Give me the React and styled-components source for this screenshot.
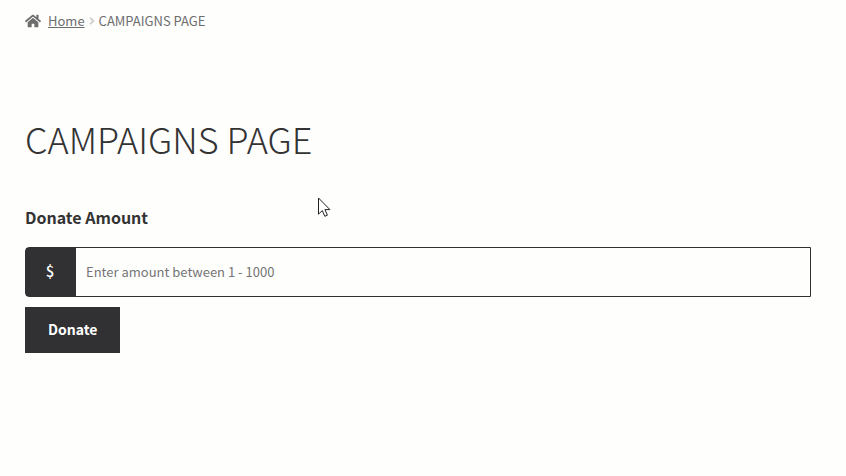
import React, { useState } from "react";
import styled, { createGlobalStyle } from "styled-components";
import { FaAngleRight, FaHome } from "react-icons/fa";

const GlobalStyle = createGlobalStyle`
  * {
    box-sizing: border-box;
  }

  body {
    margin: 0;
    background-color: #fefefd;
    color: #6d6d6d;
    font-family: "Noto Sans CJK SC", "Noto Sans", sans-serif;
    font-size: 14px;
    line-height: 20px;
  }
`;

const StylePage = styled.div`
  padding: 11px 35px 24px 25px;
`;

const StyleBreadcrumb = styled.nav`
  display: flex;
  align-items: center;
  font-size: 13px;
`;

const StyleHomeIcon = styled(FaHome)`
  width: 16px;
  height: 16px;
  margin-right: 7px;
  color: #6d6d6d;
`;

const StyleSeparator = styled(FaAngleRight)`
  width: 8px;
  height: 12px;
  margin: 0 3px;
  color: #d0d0d0;
`;

const StyleLink = styled.a`
  color: #6d6d6d;
  text-decoration: underline;
`;

const StyleTitle = styled.h1`
  margin: 77px 0 0;
  color: #333333;
  font-size: 36px;
  font-weight: 300;
  line-height: 60px;
`;

const StyleForm = styled.form`
  display: flex;
  flex-direction: column;
  align-items: flex-start;
  margin-top: 39px;
`;

const StyleLabel = styled.label`
  color: #333333;
  font-size: 16px;
  font-weight: 700;
`;

const StyleAmountGroup = styled.div`
  display: flex;
  width: 100%;
  height: 50px;
  margin: 20px 0 10px;
  border: 1px solid #313133;
  border-radius: 4px 0 0 4px;
`;

const StyleCurrency = styled.span`
  flex: none;
  display: flex;
  align-items: center;
  justify-content: center;
  width: 50px;
  padding: 0 2px 2px 0;
  background-color: #313133;
  color: white;
  font-size: 15px;
  font-weight: 500;
`;

const StyleAmountInput = styled.input`
  flex: 1;
  min-width: 0;
  padding: 0 10px 2px;
  border: none;
  outline: none;
  background-color: transparent;
  color: #43454b;
  font-family: inherit;
  font-size: 13px;

  &::placeholder {
    color: #757575;
    opacity: 1;
  }
`;

const StyleDonateButton = styled.button`
  padding: 12px 22px 14px 23px;
  border: none;
  background-color: #313133;
  color: white;
  font-family: inherit;
  font-size: 14px;
  font-weight: 700;
  line-height: 20px;
  cursor: pointer;

  &:hover {
    background-color: #1a1a1a;
  }
`;

const StyleCursor = styled.svg`
  position: absolute;
  left: 318px;
  top: 197px;
  pointer-events: none;
`;

function Breadcrumb({ current }) {
  return (
    <StyleBreadcrumb aria-label="Breadcrumb">
      <StyleHomeIcon />
      <StyleLink href="#home">Home</StyleLink>
      <StyleSeparator />
      <span>{current}</span>
    </StyleBreadcrumb>
  );
}

function DonateForm() {
  const [amount, setAmount] = useState("");

  return (
    <StyleForm onSubmit={(e) => e.preventDefault()}>
      <StyleLabel htmlFor="amount">Donate Amount</StyleLabel>
      <StyleAmountGroup>
        <StyleCurrency>$</StyleCurrency>
        <StyleAmountInput
          id="amount"
          type="text"
          inputMode="numeric"
          placeholder="Enter amount between 1 - 1000"
          value={amount}
          onChange={(e) => setAmount(e.target.value)}
        />
      </StyleAmountGroup>
      <StyleDonateButton type="submit">Donate</StyleDonateButton>
    </StyleForm>
  );
}

function App() {
  return (
    <>
      <GlobalStyle />
      <StylePage>
        <Breadcrumb current="CAMPAIGNS PAGE" />
        <main>
          <StyleTitle>CAMPAIGNS PAGE</StyleTitle>
          <DonateForm />
        </main>
      </StylePage>
      <StyleCursor width="13" height="21" viewBox="0 0 13 21" aria-hidden="true">
        <path
          d="M.5 1v16.2l3.8-3.6 2.5 5.7 2.6-1.1-2.5-5.6h5z"
          fill="white"
          stroke="#222222"
        />
      </StyleCursor>
    </>
  );
}

export default App;
